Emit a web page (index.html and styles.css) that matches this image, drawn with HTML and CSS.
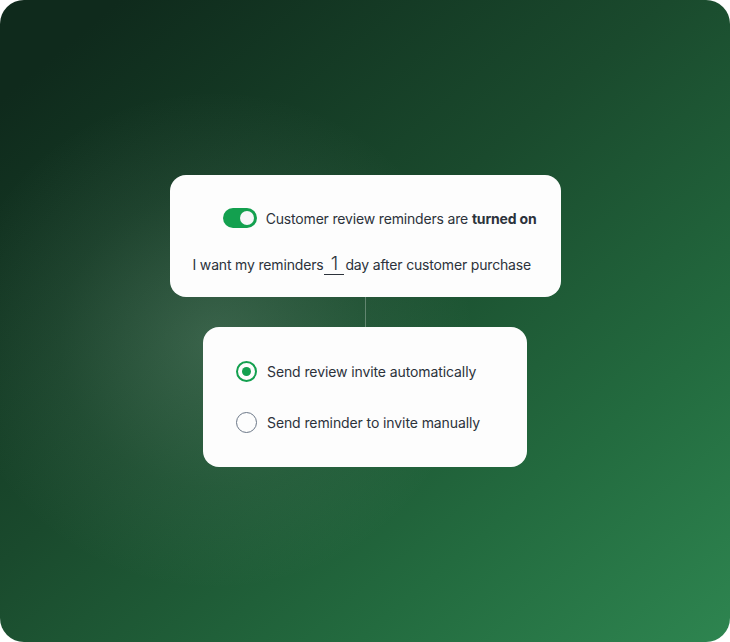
FILE: index.html
```html
<!DOCTYPE html>
<html>
<head>
<meta charset="utf-8">
<link rel="stylesheet" href="styles.css">
</head>
<body>
<div class="frame">
  <div class="stack">
    <div class="card card-top">
      <div class="row row-toggle">
        <span class="toggle"><span class="knob"></span></span>
        <span class="label">Customer review reminders are <b>turned on</b></span>
      </div>
      <div class="row row-days">
        <span class="label">I want my reminders</span>
        <span class="num">1</span>
        <span class="label">day after customer purchase</span>
      </div>
    </div>
    <div class="connector"></div>
    <div class="card card-bottom">
      <div class="option">
        <span class="radio radio-on"><span class="dot"></span></span>
        <span class="label">Send review invite automatically</span>
      </div>
      <div class="option">
        <span class="radio"></span>
        <span class="label">Send reminder to invite manually</span>
      </div>
    </div>
  </div>
</div>
</body>
</html>
```

FILE: styles.css
```css
html, body {
  margin: 0;
  padding: 0;
  background: #ffffff;
}
body {
  font-family: Inter, "Noto Sans", sans-serif;
  color: #2c323b;
}
.frame {
  width: 730px;
  height: 642px;
  border-radius: 24px;
  overflow: hidden;
  display: flex;
  align-items: center;
  justify-content: center;
  background:
    radial-gradient(ellipse 260px 250px at 215px 340px, rgba(190, 215, 200, 0.2), rgba(190, 215, 200, 0.06) 60%, rgba(190, 215, 200, 0) 100%),
    linear-gradient(140deg, #0f2a1c 8%, #1a4a2d 45%, #236b3f 75%, #2e8550 100%);
}
.stack {
  display: flex;
  flex-direction: column;
  align-items: center;
}
.card {
  background: #fdfdfd;
  border-radius: 16px;
  box-sizing: border-box;
}
.card-top {
  width: 391px;
  height: 122px;
  padding: 33px 24px 0 23px;
  display: flex;
  flex-direction: column;
}
.row {
  display: flex;
  align-items: center;
  font-size: 14px;
  letter-spacing: -0.17px;
  white-space: nowrap;
}
.row-toggle {
  justify-content: flex-end;
  height: 20px;
}
.toggle {
  width: 34px;
  height: 20px;
  border-radius: 10px;
  background: #13a04f;
  display: flex;
  align-items: center;
  justify-content: flex-end;
  padding: 0 3px;
  box-sizing: border-box;
  margin-right: 9px;
  flex-shrink: 0;
}
.knob {
  width: 14px;
  height: 14px;
  border-radius: 50%;
  background: #f6f7f9;
}
.row-days {
  margin-top: 26px;
  height: 20px;
}
.num {
  width: 20px;
  margin: 0 1px;
  text-align: center;
  font-size: 19px;
  line-height: 20px;
  border-bottom: 1px solid #2c323b;
  font-weight: 300;
  flex-shrink: 0;
}
.connector {
  width: 1px;
  height: 30px;
  background: rgba(255, 255, 255, 0.28);
}
.card-bottom {
  width: 324px;
  height: 140px;
  padding: 34px 33px 0 33px;
  display: flex;
  flex-direction: column;
  gap: 31px;
}
.option {
  display: flex;
  align-items: center;
  font-size: 14px;
  letter-spacing: -0.1px;
  height: 20px;
  white-space: nowrap;
}
.radio {
  width: 21px;
  height: 21px;
  border-radius: 50%;
  border: 1.5px solid #6b7787;
  box-sizing: border-box;
  margin-right: 10px;
  display: flex;
  align-items: center;
  justify-content: center;
  flex-shrink: 0;
}
.radio-on {
  border: 2px solid #13a04f;
}
.dot {
  width: 9px;
  height: 9px;
  border-radius: 50%;
  background: #13a04f;
}
```
